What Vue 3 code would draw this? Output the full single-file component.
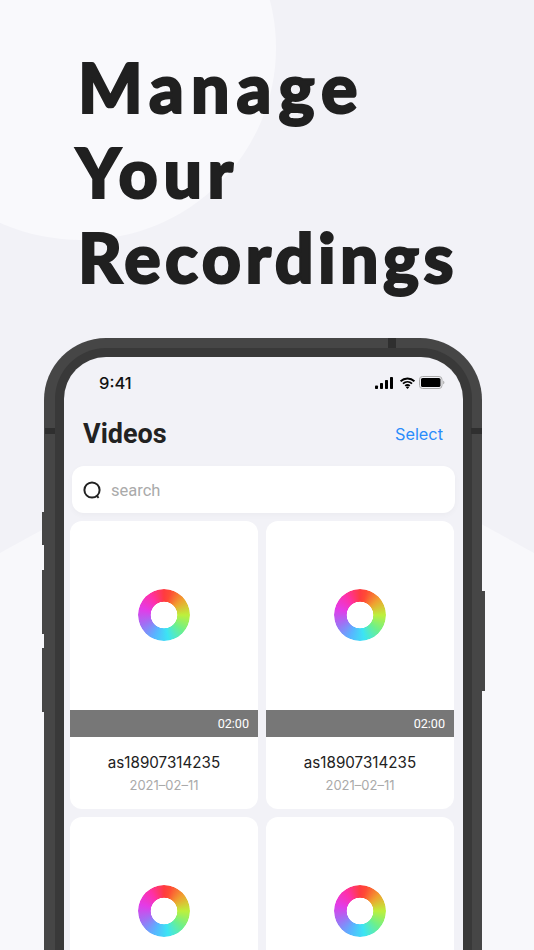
<script setup>
const cards = [1, 2, 3, 4].map((id) => ({ id, name: 'as18907314235', date: '2021–02–11', time: '02:00' }))
</script>

<template>
  <main class="page">
    <div class="circle"></div>
    <svg class="hex" viewBox="0 0 534 550" aria-hidden="true">
      <path d="M0 147L267 0L534 147V550H0Z" fill="#f8f8fb" />
    </svg>
    <h1 class="headline">
      <span class="l1">Manage</span>
      <span class="l2">Your</span>
      <span>Recordings</span>
    </h1>
    <section class="phone">
      <i class="btn btn-a"></i><i class="btn btn-b"></i><i class="btn btn-c"></i><i class="btn btn-r"></i>
      <i class="band band-l"></i><i class="band band-r"></i><i class="band band-t"></i>
      <div class="bezel">
        <div class="screen">
          <div class="status">
            <span class="clock">9:41</span>
            <div class="status-icons">
              <svg class="signal" width="18" height="12" viewBox="0 0 18 12"><rect x="0" y="8.5" width="3" height="3.5" rx=".8"/><rect x="5" y="6" width="3" height="6" rx=".8"/><rect x="10" y="3" width="3" height="9" rx=".8"/><rect x="15" y="0" width="3" height="12" rx=".8"/></svg>
              <svg width="17" height="12" viewBox="0 0 17 13"><path d="M1 4.6C5.2.6 11.8.6 16 4.6M3.6 7.2c2.8-2.5 7-2.5 9.8 0M6 9.6c1.4-1.1 3.6-1.1 5 0" fill="none" stroke="#000" stroke-width="2"/><path d="M8.5 13 6.7 11c1-.8 2.6-.8 3.6 0Z"/></svg>
              <svg width="26" height="13" viewBox="0 0 26 13"><rect x=".5" y=".5" width="22.5" height="12" rx="3" fill="none" stroke="#aaa"/><rect x="2" y="2" width="19.5" height="9" rx="1.6"/><path d="M24.2 4.8c.8.3 1.2 1 1.2 1.7s-.4 1.4-1.2 1.7Z" fill="#aaa"/></svg>
            </div>
          </div>
          <header class="nav">
            <h2>Videos</h2>
            <a>Select</a>
          </header>
          <div class="search">
            <svg width="20" height="20" viewBox="0 0 20 20"><circle cx="10" cy="10" r="7.6" fill="none" stroke="#222" stroke-width="2"/><path d="M14.6 15.6l2 2.2" stroke="#222" stroke-width="2" fill="none"/></svg>
            <span>search</span>
          </div>
          <div class="grid">
            <article v-for="c in cards" :key="c.id" class="card">
              <div class="thumb"><div class="ring"></div></div>
              <div class="bar">{{ c.time }}</div>
              <p class="name">{{ c.name }}</p>
              <p class="date">{{ c.date }}</p>
            </article>
          </div>
        </div>
      </div>
    </section>
  </main>
</template>

<style>
html, body { margin: 0; background: #f2f2f7; }
</style>

<style scoped>
.page {
  position: relative;
  width: 534px;
  height: 950px;
  overflow: hidden;
  background: #f2f2f7;
  font-family: "Inter", "Liberation Sans", sans-serif;
  color: #202020;
}
.circle {
  position: absolute;
  left: -114px;
  top: -144px;
  width: 390px;
  height: 384px;
  border-radius: 50%;
  background: #f9f9fc;
}
.hex {
  position: absolute;
  left: 0;
  top: 406px;
  width: 534px;
  height: 550px;
}
.headline {
  position: relative;
  margin: 0;
  padding: 44px 0 0 78px;
  height: 338px;
  box-sizing: border-box;
  font-family: "Lato", sans-serif;
  font-weight: 900;
  font-size: 68px;
  line-height: 85px;
  letter-spacing: 4.4px;
  -webkit-text-stroke: 2px #202020;
  color: #202020;
}
.headline span { display: block; }
.headline .l1 { letter-spacing: 7.1px; }
.headline .l2 { margin-left: -2px; letter-spacing: 5.6px; }
.phone {
  position: relative;
  width: 438px;
  margin-left: 44px;
  height: 612px;
}
.bezel {
  position: relative;
  width: 100%;
  height: 100%;
  box-sizing: border-box;
  padding: 10px 10px 0 11px;
  border-radius: 62px 62px 0 0;
  background: #464646;
}
.screen {
  height: 100%;
  box-sizing: border-box;
  border: 9px solid #393939;
  border-bottom: 0;
  border-radius: 51px 51px 0 0;
  background: #f2f2f7;
  overflow: hidden;
}
.btn, .band { position: absolute; display: block; z-index: 1; }
.btn { background: #464646; }
.btn-a { left: -2.5px; top: 174px; width: 3px; height: 33px; }
.btn-b { left: -2.5px; top: 232px; width: 3px; height: 64px; }
.btn-c { left: -2.5px; top: 310px; width: 3px; height: 64px; }
.btn-r { right: -3px; top: 253px; width: 3px; height: 100px; }
.band { background: #2f2f2f; }
.band-l { left: 1px; top: 90px; width: 10px; height: 6px; }
.band-r { right: 0; top: 90px; width: 11px; height: 6px; }
.band-t { left: 344px; top: 0; width: 8px; height: 10px; }
.status {
  height: 49px;
  display: flex;
  align-items: center;
  justify-content: space-between;
  padding: 2px 17px 0 35px;
  box-sizing: border-box;
}
.clock { font-size: 16.5px; font-weight: 500; color: #111; }
.status-icons { display: flex; align-items: center; gap: 3px; margin-right: 1px; }
.signal { margin-right: 3px; }
.nav {
  height: 54px;
  display: flex;
  align-items: center;
  justify-content: space-between;
  padding: 2px 20px 0 19px;
  box-sizing: border-box;
}
.nav h2 { margin: 0; font-family: "Roboto", sans-serif; font-size: 27px; font-weight: 700; color: #222; }
.nav a { font-size: 16.3px; color: #2a8cfb; }
.search {
  margin: 6px 8px 0 8px;
  height: 47px;
  border-radius: 12px;
  background: #fff;
  box-shadow: 0 2px 6px rgba(0, 0, 0, .03);
  display: flex;
  align-items: center;
  gap: 9px;
  padding-left: 10px;
  color: #aaa;
  font-family: "Roboto", sans-serif;
  font-size: 16.5px;
}
.search span { padding-top: 2px; }
.grid {
  margin: 8px 9px 0 6px;
  display: grid;
  grid-template-columns: 188px 188px;
  gap: 8px;
}
.card {
  height: 288px;
  border-radius: 12px;
  background: #fff;
  overflow: hidden;
  text-align: center;
}
.thumb {
  height: 189px;
  display: flex;
  justify-content: center;
  align-items: center;
  padding-bottom: 1px;
  box-sizing: border-box;
}
.ring {
  width: 52px;
  height: 52px;
  border-radius: 50%;
  background: conic-gradient(#ff3b40 0deg, #ff4a35 15deg, #f0a030 50deg, #bdf03c 90deg, #6ef08a 130deg, #3ce4f4 170deg, #58b4ff 205deg, #a070f4 245deg, #e23ce8 285deg, #ff30a8 325deg, #ff3b40 360deg);
  -webkit-mask: radial-gradient(circle, transparent 13px, #000 13.6px);
  mask: radial-gradient(circle, transparent 13px, #000 13.6px);
}
.bar {
  height: 27px;
  background: #777;
  color: #fff;
  font-family: "Roboto", sans-serif;
  font-size: 12.6px;
  line-height: 28px;
  text-align: right;
  padding-right: 9px;
}
.name { margin: 16px 0 0; font-size: 15.2px; line-height: 20px; color: #222; }
.date { margin: 4px 0 0; font-size: 13px; line-height: 16px; color: #aaa; }
</style>
